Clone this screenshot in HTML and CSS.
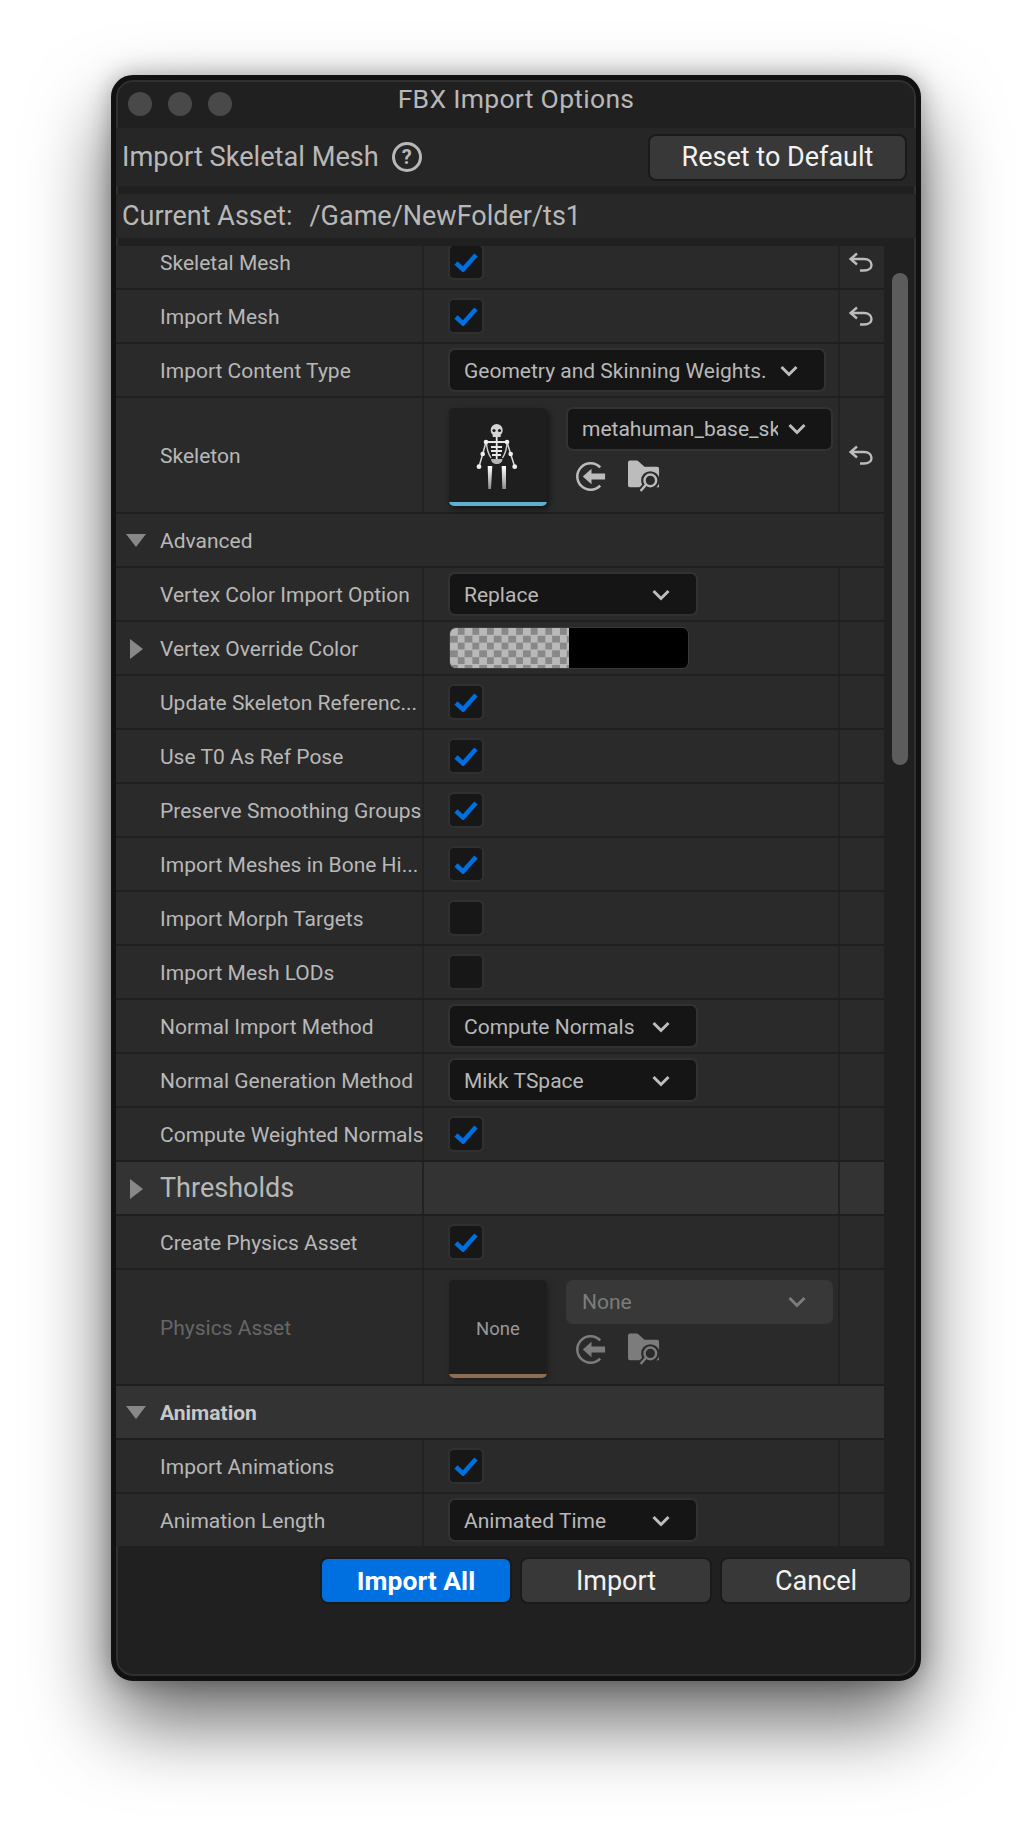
FILE: index.html
```html
<!DOCTYPE html>
<html lang="en">

<head>
    <meta charset="UTF-8">
    <title>FBX Import Options</title>
    <link rel="stylesheet" href="styles.css">
</head>

<body>
    <svg class="defs" width="0" height="0">
        <symbol id="tick" viewBox="0 0 24 20"><path d="M2 11l7 6.500L22 3" fill="none" stroke="#0070e0" stroke-width="4.500"/></symbol>
        <symbol id="chevron" viewBox="0 0 18 12"><path d="M1.500 2l7.500 7.500L16.500 2" fill="none" stroke="currentColor" stroke-width="3"/></symbol>
        <symbol id="undo" viewBox="0 0 24 20"><path d="M8 1.500L1.500 7 8 12.500M2 7h13c5 0 7.500 3 7.500 6s-2.500 5.500-7.500 5.500h-4" fill="none" stroke="currentColor" stroke-width="2.400"/></symbol>
        <symbol id="use-asset" viewBox="0 0 32 32"><path d="M25 6.600a13.700 13.700 0 1 0 0 18.800" fill="none" stroke="currentColor" stroke-width="2.600"/><path d="M7 16l9-8v5h14v6H16v5z" fill="currentColor"/></symbol>
        <symbol id="browse" viewBox="0 0 34 34">
            <path d="M0 2.500a2 2 0 0 1 2-2h6c1.500 0 2.500.5 3.500 1.500L17 7h13a2 2 0 0 1 2 2v19H2a2 2 0 0 1-2-2z" fill="currentColor"/>
            <path d="M19 26l-7 7" stroke="#2a2a2a" stroke-width="7"/>
            <circle cx="23" cy="21" r="9.500" fill="#2a2a2a"/>
            <circle cx="23" cy="21" r="6" fill="none" stroke="currentColor" stroke-width="2.500"/>
            <path d="M18.500 25.500L13 32" stroke="currentColor" stroke-width="2.500"/>
        </symbol>
    </svg>

    <div class="window">
        <div class="titlebar">
            <div class="lights"><span></span><span></span><span></span></div>
            <div class="title">FBX Import Options</div>
        </div>

        <div class="head">
            <span class="head-text">Import Skeletal Mesh</span>
            <span class="help">?</span>
            <button class="btn reset-all">Reset to Default</button>
        </div>

        <div class="asset">
            <span>Current Asset:</span>
            <span>/Game/NewFolder/ts1</span>
        </div>

        <div class="body">
            <div class="rows">
                <div class="list">
                    <div class="row">
                        <div class="name">Skeletal Mesh</div>
                        <div class="value"><span class="check"><svg><use href="#tick"/></svg></span></div>
                        <div class="undo"><svg><use href="#undo"/></svg></div>
                    </div>
                    <div class="row">
                        <div class="name">Import Mesh</div>
                        <div class="value"><span class="check"><svg><use href="#tick"/></svg></span></div>
                        <div class="undo"><svg><use href="#undo"/></svg></div>
                    </div>
                    <div class="row">
                        <div class="name">Import Content Type</div>
                        <div class="value"><div class="combo wide">Geometry and Skinning Weights.<svg><use href="#chevron"/></svg></div></div>
                        <div class="undo"></div>
                    </div>
                    <div class="row tall">
                        <div class="name">Skeleton</div>
                        <div class="value asset-value">
                            <div class="thumb">
                                <svg class="skeleton" width="98" height="90" viewBox="0 0 98 90">
                                    <defs><linearGradient id="bone" x1="0" y1="0" x2="0" y2="1"><stop offset="0" stop-color="#fff"/><stop offset="1" stop-color="#8c8c8c"/></linearGradient></defs>
                                    <path d="M41.700 22a6 6 0 1 1 12 0c0 2.500-1 4-2 4.800V29h-8v-2.200c-1-.8-2-2.300-2-4.800z" fill="#d4d4d4"/>
                                    <circle cx="45" cy="22.500" r="1.600" fill="#1e1e1e"/>
                                    <circle cx="50.500" cy="22.500" r="1.600" fill="#1e1e1e"/>
                                    <path d="M37 34h21M47.700 29v22M42 39h11M42 43h11M43 47h9" fill="none" stroke="#e8e8e8" stroke-width="1.800"/>
                                    <path d="M37.500 34c0 6 2 12 4.500 16M58 34c0 6-2 12-4.500 16" fill="none" stroke="#cfcfcf" stroke-width="1.400"/>
                                    <path d="M37 34l-3.300 12L30 58.700M58 34l3.700 12 4 12.700" fill="none" stroke="#d8d8d8" stroke-width="1.500"/>
                                    <circle cx="37" cy="34" r="2.300" fill="#eee"/><circle cx="58" cy="34" r="2.300" fill="#eee"/>
                                    <circle cx="33.700" cy="46" r="2.300" fill="#eee"/><circle cx="61.700" cy="46" r="2.300" fill="#eee"/>
                                    <circle cx="30" cy="58.700" r="2.400" fill="#eee"/><circle cx="65.700" cy="58.700" r="2.400" fill="#eee"/>
                                    <path d="M42 51h11.500c0 3-2.500 5-5.700 5S42 54 42 51z" fill="#b4b4b4"/>
                                    <path d="M38.700 58h4.600L42 81h-2.700zM52.700 58H57v23h-3.700z" fill="url(#bone)"/>
                                </svg>
                                <span class="thumb-bar skel-bar"></span>
                            </div>
                            <div class="picker">
                                <div class="combo pick"><span class="clip">metahuman_base_skel</span><svg><use href="#chevron"/></svg></div>
                                <div class="tools">
                                    <svg class="tool-a"><use href="#use-asset"/></svg>
                                    <svg class="tool-b"><use href="#browse"/></svg>
                                </div>
                            </div>
                        </div>
                        <div class="undo"><svg><use href="#undo"/></svg></div>
                    </div>
                    <div class="row group">
                        <div class="name"><span class="tri down"></span>Advanced</div>
                    </div>
                    <div class="row">
                        <div class="name">Vertex Color Import Option</div>
                        <div class="value"><div class="combo">Replace<svg><use href="#chevron"/></svg></div></div>
                        <div class="undo"></div>
                    </div>
                    <div class="row">
                        <div class="name"><span class="tri right"></span>Vertex Override Color</div>
                        <div class="value"><div class="swatch"><span class="checker"></span><span class="solid"></span></div></div>
                        <div class="undo"></div>
                    </div>
                    <div class="row">
                        <div class="name">Update Skeleton Referenc...</div>
                        <div class="value"><span class="check"><svg><use href="#tick"/></svg></span></div>
                        <div class="undo"></div>
                    </div>
                    <div class="row">
                        <div class="name">Use T0 As Ref Pose</div>
                        <div class="value"><span class="check"><svg><use href="#tick"/></svg></span></div>
                        <div class="undo"></div>
                    </div>
                    <div class="row">
                        <div class="name">Preserve Smoothing Groups</div>
                        <div class="value"><span class="check"><svg><use href="#tick"/></svg></span></div>
                        <div class="undo"></div>
                    </div>
                    <div class="row">
                        <div class="name">Import Meshes in Bone Hi...</div>
                        <div class="value"><span class="check"><svg><use href="#tick"/></svg></span></div>
                        <div class="undo"></div>
                    </div>
                    <div class="row">
                        <div class="name">Import Morph Targets</div>
                        <div class="value"><span class="check"></span></div>
                        <div class="undo"></div>
                    </div>
                    <div class="row">
                        <div class="name">Import Mesh LODs</div>
                        <div class="value"><span class="check"></span></div>
                        <div class="undo"></div>
                    </div>
                    <div class="row">
                        <div class="name">Normal Import Method</div>
                        <div class="value"><div class="combo">Compute Normals<svg><use href="#chevron"/></svg></div></div>
                        <div class="undo"></div>
                    </div>
                    <div class="row">
                        <div class="name">Normal Generation Method</div>
                        <div class="value"><div class="combo">Mikk TSpace<svg><use href="#chevron"/></svg></div></div>
                        <div class="undo"></div>
                    </div>
                    <div class="row">
                        <div class="name">Compute Weighted Normals</div>
                        <div class="value"><span class="check"><svg><use href="#tick"/></svg></span></div>
                        <div class="undo"></div>
                    </div>
                    <div class="row section">
                        <div class="name big"><span class="tri right"></span>Thresholds</div>
                        <div class="value"></div>
                        <div class="undo"></div>
                    </div>
                    <div class="row">
                        <div class="name">Create Physics Asset</div>
                        <div class="value"><span class="check"><svg><use href="#tick"/></svg></span></div>
                        <div class="undo"></div>
                    </div>
                    <div class="row tall">
                        <div class="name dim">Physics Asset</div>
                        <div class="value asset-value">
                            <div class="thumb none">
                                <span class="none-text">None</span>
                                <span class="thumb-bar phys-bar"></span>
                            </div>
                            <div class="picker off">
                                <div class="combo pick"><span class="clip">None</span><svg><use href="#chevron"/></svg></div>
                                <div class="tools">
                                    <svg class="tool-a"><use href="#use-asset"/></svg>
                                    <svg class="tool-b"><use href="#browse"/></svg>
                                </div>
                            </div>
                        </div>
                        <div class="undo"></div>
                    </div>
                    <div class="row section">
                        <div class="name bold"><span class="tri down"></span>Animation</div>
                    </div>
                    <div class="row">
                        <div class="name">Import Animations</div>
                        <div class="value"><span class="check"><svg><use href="#tick"/></svg></span></div>
                        <div class="undo"></div>
                    </div>
                    <div class="row">
                        <div class="name">Animation Length</div>
                        <div class="value"><div class="combo">Animated Time<svg><use href="#chevron"/></svg></div></div>
                        <div class="undo"></div>
                    </div>
                </div>
            </div>
            <div class="track"><div class="thumb-scroll"></div></div>
        </div>

        <div class="footer">
            <button class="btn primary">Import All</button>
            <button class="btn">Import</button>
            <button class="btn cancel">Cancel</button>
        </div>
    </div>
</body>

</html>
```

FILE: styles.css
```css
* {
    box-sizing: border-box;
}

body {
    margin: 0;
    padding: 75px 0 0 111px;
    height: 1828px;
    overflow: hidden;
    background-color: #fff;
    font-family: Roboto, "Liberation Sans", sans-serif;
    color: #b8b8b8;
}

.defs {
    position: absolute;
}

.window {
    width: 810px;
    height: 1606px;
    border: 5px solid #111;
    border-radius: 22px;
    background-color: #202020;
    box-shadow: inset 0 0 0 2px #303030, 0 40px 80px rgba(0, 0, 0, 0.6), 0 0 24px rgba(0, 0, 0, 0.3);
    overflow: hidden;
}

.titlebar {
    height: 48px;
    display: flex;
    align-items: center;
    position: relative;
}

.lights {
    display: flex;
    gap: 16px;
    padding-left: 12px;
}

.lights span {
    width: 24px;
    height: 24px;
    border-radius: 50%;
    background-color: #494949;
}

.title {
    position: absolute;
    left: 0;
    right: 0;
    top: 3px;
    text-align: center;
    font-size: 26.500px;
    letter-spacing: 0.3px;
}

.head {
    height: 58px;
    background-color: #262626;
    display: flex;
    align-items: center;
    padding: 0 9px 0 6px;
    font-size: 27.200px;
}

.head-text {
    margin-top: -1px;
}

.help {
    width: 30px;
    height: 30px;
    margin-left: 13px;
    border: 3px solid #b8b8b8;
    border-radius: 50%;
    font-size: 20px;
    font-weight: 700;
    line-height: 24px;
    text-align: center;
}

.btn {
    height: 47px;
    width: 192px;
    border: 2px solid #1a1a1a;
    border-radius: 8px;
    background-color: #383838;
    color: #f2f2f2;
    font-family: inherit;
    font-size: 27px;
    padding: 0;
}

.reset-all {
    width: 259px;
    margin-left: auto;
}

.asset {
    height: 44px;
    margin-top: 8px;
    background-color: #282828;
    display: flex;
    align-items: center;
    gap: 17px;
    padding-left: 6px;
    font-size: 27px;
}

.asset span {
    margin-top: -1px;
}

.body {
    height: 1300px;
    margin-top: 8px;
    display: flex;
}

.rows {
    width: 768px;
    overflow: hidden;
}

.list {
    margin-top: -10px;
}

.row {
    height: 54px;
    display: flex;
    background-color: #2a2a2a;
    border-bottom: 2px solid #1f1f1f;
    font-size: 21px;
}

.row.tall {
    height: 116px;
}

.row.section {
    background-color: #333;
}

.name {
    width: 308px;
    padding: 2px 0 0 44px;
    display: flex;
    align-items: center;
    white-space: nowrap;
    position: relative;
    border-right: 2px solid #222;
}

.group .name,
.row.section .bold {
    width: 100%;
    border-right: none;
}

.name.big {
    padding-top: 0;
    font-size: 27px;
}

.name.bold {
    font-weight: 700;
    color: #c8c8c8;
}

.name.dim {
    color: #666;
}

.tri {
    position: absolute;
    width: 0;
    height: 0;
}

.tri.down {
    left: 10px;
    top: 20px;
    border-left: 10px solid transparent;
    border-right: 10px solid transparent;
    border-top: 13px solid #888;
}

.tri.right {
    left: 14px;
    top: 17px;
    border-top: 10px solid transparent;
    border-bottom: 10px solid transparent;
    border-left: 13px solid #888;
}

.value {
    width: 416px;
    padding-left: 24px;
    display: flex;
    align-items: center;
    border-right: 2px solid #222;
}

.undo {
    width: 44px;
    padding-right: 3px;
    display: flex;
    align-items: center;
    justify-content: center;
}

.undo svg {
    width: 24px;
    height: 20px;
    color: #bcbcbc;
}

.check {
    width: 36px;
    height: 36px;
    border: 2px solid #303030;
    border-radius: 6px;
    background-color: #171717;
    display: flex;
    align-items: center;
    justify-content: center;
}

.check svg {
    width: 24px;
    height: 20px;
}

.combo {
    width: 250px;
    height: 44px;
    border: 2px solid #323232;
    border-radius: 7px;
    background-color: #151515;
    display: flex;
    align-items: center;
    justify-content: space-between;
    padding: 2px 26px 0 14px;
    font-size: 21px;
    white-space: nowrap;
}

.combo svg {
    width: 18px;
    height: 12px;
    color: #bdbdbd;
    flex-shrink: 0;
}

.combo.wide {
    width: 378px;
}

.swatch {
    width: 240px;
    height: 42px;
    margin-left: 1px;
    display: flex;
    border: 1px solid #3a3a3a;
    border-radius: 7px;
    overflow: hidden;
}

.checker {
    width: 119px;
    background-color: #b9b9b9;
    background-image: conic-gradient(#888 25%, transparent 0 50%, #888 0 75%, transparent 0);
    background-size: 14.600px 14.600px;
}

.solid {
    flex: 1;
    background-color: #000;
}

.asset-value {
    gap: 19px;
    padding: 10px 0 0 25px;
    align-items: flex-start;
}

.thumb {
    width: 98px;
    height: 98px;
    border-radius: 5px;
    background-color: #1e1e1e;
    box-shadow: 2px 3px 6px rgba(0, 0, 0, 0.55);
    display: flex;
    flex-direction: column;
    align-items: center;
    justify-content: space-between;
    overflow: hidden;
}

.thumb.none {
    box-shadow: 2px 3px 6px rgba(0, 0, 0, 0.25);
}

.none-text {
    margin-top: 38px;
    font-size: 18.500px;
    color: #999;
}

.thumb-bar {
    width: 100%;
    height: 4px;
    flex-shrink: 0;
}

.skel-bar {
    background-color: #5fb0cf;
}

.phys-bar {
    background-color: #8f6d50;
}

.picker {
    width: 267px;
    margin-top: -1px;
}

.combo.pick {
    width: 100%;
    padding: 0 25px 0 14px;
}

.clip {
    width: 196px;
    overflow: hidden;
    color: #bcbcbc;
}

.tools {
    display: flex;
    align-items: center;
    gap: 21px;
    padding: 9px 0 0 10px;
    color: #bcbcbc;
}

.tool-a {
    width: 31px;
    height: 31px;
}

.tool-b {
    width: 33px;
    height: 33px;
}

.picker.off {
    margin-top: 0;
}

.picker.off .combo {
    background-color: #383838;
    border-color: #383838;
}

.picker.off .clip,
.picker.off .combo svg,
.picker.off .tools {
    color: #7c7c7c;
}

.track {
    flex: 1;
    padding: 27px 8px 0 8px;
}

.thumb-scroll {
    height: 492px;
    width: 16px;
    border-radius: 8px;
    background-color: #5c5c5c;
}

.footer {
    display: flex;
    justify-content: flex-end;
    gap: 8px;
    padding: 11px 4px 0 0;
}

.footer .primary {
    background-color: #0070e0;
    color: #fff;
    font-size: 26.500px;
    font-weight: 700;
}
```
